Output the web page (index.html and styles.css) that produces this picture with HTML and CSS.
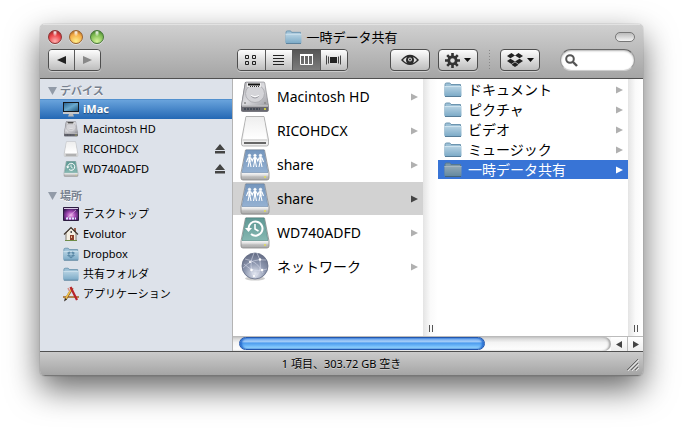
FILE: index.html
```html
<!DOCTYPE html>
<html lang="ja">
<head>
    <meta charset="UTF-8">
    <meta name="viewport" content="width=device-width, initial-scale=1.0">
    <title>一時データ共有</title>
    <link rel="stylesheet" href="styles.css">
</head>
<body>

    <!-- shared icons -->
    <svg class="sprite" aria-hidden="true">
        <defs>
            <linearGradient id="g-folder" x1="0" y1="0" x2="0" y2="1"><stop offset="0" stop-color="#b9d4e4"/><stop offset="1" stop-color="#7aa9c6"/></linearGradient>
            <linearGradient id="g-metal" x1="0" y1="0" x2="1" y2="1"><stop offset="0" stop-color="#b4b4b8"/><stop offset=".5" stop-color="#dcdce0"/><stop offset="1" stop-color="#9c9ca2"/></linearGradient>
            <linearGradient id="g-white" x1="0" y1="0" x2="0" y2="1"><stop offset="0" stop-color="#eeeeee"/><stop offset="1" stop-color="#ffffff"/></linearGradient>
            <linearGradient id="g-base" gradientUnits="userSpaceOnUse" x1="0" y1="23" x2="0" y2="31"><stop offset="0" stop-color="#ffffff"/><stop offset=".4" stop-color="#e0e0e0"/><stop offset=".6" stop-color="#bcbcbc"/><stop offset="1" stop-color="#a8a8a8"/></linearGradient>
            <linearGradient id="g-share" x1="0" y1="0" x2="0" y2="1"><stop offset="0" stop-color="#7596bd"/><stop offset="1" stop-color="#94b1d2"/></linearGradient>
            <linearGradient id="g-tm" x1="0" y1="0" x2="0" y2="1"><stop offset="0" stop-color="#5f9894"/><stop offset="1" stop-color="#86b8b2"/></linearGradient>
            <radialGradient id="g-globe" cx=".5" cy=".8" r=".8"><stop offset="0" stop-color="#e4e8f2"/><stop offset=".5" stop-color="#8e98b0"/><stop offset="1" stop-color="#626a82"/></radialGradient>
            <linearGradient id="g-screen" x1="0" y1="0" x2="1" y2="1"><stop offset="0" stop-color="#2b6694"/><stop offset=".5" stop-color="#69a8cd"/><stop offset="1" stop-color="#22597f"/></linearGradient>
            <radialGradient id="g-nebula" cx=".5" cy=".6" r=".6"><stop offset="0" stop-color="#f2b5ee"/><stop offset=".5" stop-color="#9c43ae"/><stop offset="1" stop-color="#351854"/></radialGradient>
        </defs>
        <symbol id="folder" viewBox="0 0 18 15">
            <path d="M1 13.500V2.500Q1 1 2.500 1H5.500Q6.500 1 7 2.500H16.500V13.500Z" fill="#9bbfd5" stroke="#6e96b0"/>
            <path d="M.5 4H17.500V13.500Q17.500 14.500 16.500 14.500H1.500Q.5 14.500 .5 13.500Z" fill="url(#g-folder)"/>
            <path d="M.5 4.500H17.500" stroke="#cfe3ee"/>
            <path d="M1 14.500H17" stroke="#577e99"/>
        </symbol>
        <symbol id="hd" viewBox="0 0 30 32">
            <path d="M5 1H24L28.500 25V29Q28.500 31 27 31H3Q1 31 1 29V25Z" fill="#77777f"/>
            <path d="M6.500 1H23.500Q24.500 1 24.800 2L28.500 24.500H1.500L5.200 2Q5.500 1 6.500 1Z" fill="url(#g-metal)" stroke="#85858a" stroke-width=".6"/>
            <ellipse cx="15" cy="12.500" rx="9.500" ry="9" fill="#d4d4d8" stroke="#a8a8ad" stroke-width=".8"/>
            <path d="M11 15Q15 19 19 15" fill="none" stroke="#9a9aa0"/>
            <path d="M11 14.500Q15 17 19 14.500" fill="none" stroke="#fff"/>
            <rect x="7" y="2" width="14" height="4" fill="#eee"/>
            <path d="M8 3.500H20" stroke="#111" stroke-width="2.200"/>
            <path d="M10 5.500H19" stroke="#333" stroke-dasharray="1 1"/>
            <circle cx="5" cy="22" r="1" fill="#888"/><circle cx="25" cy="22" r="1" fill="#888"/>
            <rect x="1.500" y="25" width="27" height="5" fill="#686870"/>
            <path d="M2 25H28" stroke="#eee"/>
            <path d="M4 28H20" stroke="#444a55" stroke-width="2" stroke-dasharray="2 1"/>
            <circle cx="25" cy="28" r="1" fill="#e8e83a"/>
        </symbol>
        <symbol id="disk" viewBox="0 0 30 32">
            <path d="M6 1.500H24L28.500 25V29Q28.500 31 26.500 31H3.500Q1.500 31 1.500 29V25Z" fill="#ededed" stroke="#a2a2a2" stroke-width=".8"/>
            <path d="M6.500 2H23.500L27 24H3Z" fill="url(#g-white)"/>
            <path d="M2.500 25H27.500" stroke="#ccc"/>
            <path d="M4 28H26" stroke="#666" stroke-width="1.800"/>
        </symbol>
        <symbol id="share" viewBox="0 0 30 32">
            <path d="M5.500 1H24.500L29 24V29Q29 31 27 31H3Q1 31 1 29V24Z" fill="url(#g-base)" stroke="#888" stroke-width=".8"/>
            <path d="M6 1H24L28 23.500H2Z" fill="url(#g-share)" stroke="#6b88aa" stroke-width=".6"/>
            <g fill="#fff" stroke="#fff" stroke-width=".6"><circle cx="9.500" cy="6.500" r="1.300"/><circle cx="15" cy="6.500" r="1.300"/><circle cx="20.500" cy="6.500" r="1.300"/>
            <path d="M9.500 8V13M15 8V13M20.500 8V13" stroke-width="2.200"/>
            <path d="M6.500 13L8 9H11L12.200 12L13.500 9H16.500L17.800 12L19 9H22L23.500 13M9.200 12L8 18M9.800 12L11 18M14.700 12L13.500 18M15.300 12L16.500 18M20.200 12L19 18M20.800 12L22 18" fill="none" stroke-width="1.100"/></g>
            <circle cx="25" cy="28" r="1" fill="#e0dc55"/>
        </symbol>
        <symbol id="timemachine" viewBox="0 0 30 32">
            <path d="M5.500 1H24.500L29 24V29Q29 31 27 31H3Q1 31 1 29V24Z" fill="url(#g-base)" stroke="#888" stroke-width=".8"/>
            <path d="M6 1H24L28 23.500H2Z" fill="url(#g-tm)" stroke="#4c8480" stroke-width=".6"/>
            <path d="M8.500 12A7 7 0 1 1 11 17" fill="none" stroke="#fff" stroke-width="2"/>
            <path d="M5 11H12L8.500 15Z" fill="#fff"/>
            <path d="M15 7V12L18.500 14" fill="none" stroke="#fff" stroke-width="1.600"/>
            <circle cx="25" cy="28" r="1" fill="#e0dc55"/>
        </symbol>
        <symbol id="network" viewBox="0 0 30 32">
            <ellipse cx="15" cy="27.500" rx="10" ry="2" fill="#ccc"/>
            <circle cx="15" cy="15" r="13" fill="url(#g-globe)" stroke="#656d85" stroke-width=".8"/>
            <path d="M3 17Q12 7 26 9M5 8Q18 10 23 22M4 13Q14 23 27 18M14 2Q8 14 14 27M17 2Q25 16 15 27" fill="none" stroke="#dce1ee" stroke-width=".7" opacity=".8"/>
            <g fill="#fff"><circle cx="10" cy="11" r="1.100"/><circle cx="20" cy="8.500" r="1.200"/><circle cx="11.500" cy="19" r="1.300"/><circle cx="22" cy="19" r="1.300"/><circle cx="14" cy="25" r="1.100"/></g>
        </symbol>
        <symbol id="eject" viewBox="0 0 10 10">
            <path d="M5 0L10 6H0ZM0 7H10V9.500H0Z" fill="currentColor"/>
        </symbol>
        <symbol id="arrow" viewBox="0 0 7 8">
            <path d="M0 .5L7 4L0 7.500Z" fill="currentColor"/>
        </symbol>
        <symbol id="dropbox" viewBox="0 0 16 14">
            <path d="M4.500 0L8 2.500L3.500 5.300L0 3ZM11.500 0L16 3L12.500 5.300L8 2.500ZM3.500 5.700L8 8.500L4.500 11L0 8ZM12.500 5.700L16 8L11.500 11L8 8.500ZM8 9.300L11.500 11.700L8 14L4.500 11.700Z" fill="currentColor"/>
        </symbol>
    </svg>

    <main class="window">
        <header class="titlebar">
            <div class="title-row">
                <div class="lights">
                    <button class="light close" aria-label="閉じる"></button>
                    <button class="light minimize" aria-label="しまう"></button>
                    <button class="light zoom" aria-label="拡大"></button>
                </div>
                <h1 class="title"><svg width="17" height="14"><use href="#folder"/></svg>一時データ共有</h1>
                <div class="title-end"><button class="pill" aria-label="ツールバー"></button></div>
            </div>
            <div class="toolbar">
                <div class="segments nav">
                    <button aria-label="戻る"><svg width="9" height="8" viewBox="0 0 9 8"><path d="M0 4L9 0V8Z" fill="#222"/></svg></button>
                    <button aria-label="進む"><svg width="9" height="8" viewBox="0 0 9 8"><path d="M9 4L0 0V8Z" fill="#888"/></svg></button>
                </div>
                <div class="segments views">
                    <button aria-label="アイコン"><svg width="12" height="12" viewBox="0 0 12 12"><path d="M.5 1.500H3.500V4.500H.5ZM7.500 1.500H10.500V4.500H7.500ZM.5 7.500H3.500V10.500H.5ZM7.500 7.500H10.500V10.500H7.500Z" fill="none" stroke="#222"/></svg></button>
                    <button aria-label="リスト"><svg width="12" height="12" viewBox="0 0 12 12"><path d="M0 1.500H11M0 4.500H11M0 7.500H11M0 10.500H11" stroke="#222"/></svg></button>
                    <button class="active" aria-label="カラム" aria-pressed="true"><svg width="13" height="12" viewBox="0 0 13 12"><path d="M.5 .5H12.500V10.500H.5ZM4.500 1V11M8.500 1V11" fill="none" stroke="#fff"/><path d="M0 1H13" stroke="#fff" stroke-width="2"/></svg></button>
                    <button aria-label="Cover Flow"><svg width="15" height="12" viewBox="0 0 15 12"><path d="M.5 1.500V10.500M2.500 2.500V9.500M12.500 2.500V9.500M14.500 1.500V10.500" stroke="#444"/><path d="M4 3H11V9H4Z" fill="#222"/></svg></button>
                </div>
                <div class="tools">
                    <button class="tool" aria-label="クイックルック"><svg width="18" height="12" viewBox="0 0 18 12"><path d="M0 6Q9 -4.500 18 6Q9 16 0 6Z" fill="#2a2a2a"/><path d="M2 6Q4 3.700 6 3Q4 6 6 9Q4 8.300 2 6ZM16 6Q14 3.700 12 3Q14 6 12 9Q14 8.300 16 6Z" fill="#ddd"/><circle cx="9" cy="5.500" r="1.900" fill="#ddd"/><circle cx="9" cy="5.500" r=".9" fill="#222"/></svg></button>
                    <button class="tool" aria-label="アクション"><svg width="15" height="15" viewBox="0 0 15 15"><path d="M7.500 0V15M0 7.500H15M2.200 2.200L12.800 12.800M12.800 2.200L2.200 12.800" stroke="#333" stroke-width="2.600"/><circle cx="7.500" cy="7.500" r="3.700" fill="#dedede" stroke="#333" stroke-width="2.800"/></svg><svg width="7" height="4" viewBox="0 0 7 4"><path d="M0 0H7L3.500 4Z" fill="#111"/></svg></button>
                    <span class="separator"></span>
                    <button class="tool" aria-label="Dropbox"><svg width="16" height="14"><use href="#dropbox"/></svg><svg width="7" height="4" viewBox="0 0 7 4"><path d="M0 0H7L3.500 4Z" fill="#111"/></svg></button>
                    <label class="search">
                        <svg width="13" height="13" viewBox="0 0 13 13"><circle cx="5" cy="5" r="3.800" fill="none" stroke="#555" stroke-width="2"/><path d="M8 8L12 12" stroke="#555" stroke-width="2.400"/></svg>
                        <input type="text" aria-label="検索">
                    </label>
                </div>
            </div>
        </header>

        <div class="content">
            <nav class="sidebar">
                <section class="group">
                    <h2><svg width="9" height="8" viewBox="0 0 9 8"><path d="M0 0H9L4.500 8Z" fill="#929ba8"/></svg>デバイス</h2>
                    <a class="place selected" href="#"><svg width="16" height="16" viewBox="0 0 16 16"><path d="M0 1H16V13H0Z" fill="#16191f"/><path d="M1 2H15V10H1Z" fill="url(#g-screen)"/><path d="M0 11H16V13H0Z" fill="#c5c8cc"/><path d="M6 13H10L11 15.500H5Z" fill="#b9b9b9"/></svg><span>iMac</span></a>
                    <a class="place" href="#"><svg width="16" height="16"><use href="#hd"/></svg><span>Macintosh HD</span></a>
                    <a class="place" href="#"><svg width="16" height="16"><use href="#disk"/></svg><span>RICOHDCX</span><svg class="eject" width="10" height="10"><use href="#eject"/></svg></a>
                    <a class="place" href="#"><svg width="16" height="16"><use href="#timemachine"/></svg><span>WD740ADFD</span><svg class="eject" width="10" height="10"><use href="#eject"/></svg></a>
                </section>
                <section class="group">
                    <h2><svg width="9" height="8" viewBox="0 0 9 8"><path d="M0 0H9L4.500 8Z" fill="#929ba8"/></svg>場所</h2>
                    <a class="place" href="#"><svg width="16" height="16" viewBox="0 0 16 16"><path d="M.5 1.500H15.500V14.500H.5Z" fill="url(#g-nebula)" stroke="#2c1b40"/><path d="M1 2.500H15" stroke="#d8c8e4"/><path d="M3 13L13 4" stroke="#f1c4f2" opacity=".6"/><path d="M3 12.500H13" stroke="#dbeaff" stroke-width="2" stroke-dasharray="2 1"/></svg><span>デスクトップ</span></a>
                    <a class="place" href="#"><svg width="16" height="16" viewBox="0 0 16 16"><path d="M3 7L8 2L13 7V14.500H3Z" fill="#f4eee2" stroke="#6c6358" stroke-width=".8"/><path d="M11 2H13V6H11Z" fill="#9b5e49"/><path d="M1 8.500L8 1.500L15 8.500" fill="none" stroke="#42372f" stroke-width="1.200"/><path d="M7 9H11V14.500H7Z" fill="#8d402c"/><path d="M7.500 5H9V7H7.500Z" fill="#555"/><path d="M8 10H9V12H8Z" fill="#e9b58b"/><path d="M2 14.500H14" stroke="#6e8b47"/></svg><span>Evolutor</span></a>
                    <a class="place" href="#"><svg width="16" height="16" viewBox="0 0 16 16"><use href="#folder" width="16" height="14" y="1"/><g color="#5c8aa8"><use href="#dropbox" x="4" y="5" width="8" height="8"/></g></svg><span>Dropbox</span></a>
                    <a class="place" href="#"><svg width="16" height="14"><use href="#folder"/></svg><span>共有フォルダ</span></a>
                    <a class="place" href="#"><svg width="16" height="16" viewBox="0 0 16 16"><path d="M0 11H16" stroke="#b18350" stroke-width="1.800"/><path d="M9.500 2L2.500 13.500" stroke="#7b4e24" stroke-width="2.400"/><path d="M9 2L2.500 13" stroke="#f0c14a" stroke-width="1.500"/><path d="M5 2L6.500 5" stroke="#d98f86" stroke-width="1.600"/><path d="M7.500 1L14 14" stroke="#b9222a" stroke-width="2.200"/><path d="M2 12L1 15.500L4 13.500Z" fill="#332a22"/></svg><span>アプリケーション</span></a>
                </section>
            </nav>

            <div class="browser">
                <div class="columns">
                    <div class="column large">
                        <div class="items">
                            <a class="item" href="#"><svg width="30" height="32"><use href="#hd"/></svg><span>Macintosh HD</span><svg class="arrow" width="7" height="8"><use href="#arrow"/></svg></a>
                            <a class="item" href="#"><svg width="30" height="32"><use href="#disk"/></svg><span>RICOHDCX</span><svg class="arrow" width="7" height="8"><use href="#arrow"/></svg></a>
                            <a class="item" href="#"><svg width="30" height="32"><use href="#share"/></svg><span>share</span><svg class="arrow" width="7" height="8"><use href="#arrow"/></svg></a>
                            <a class="item open" href="#"><svg width="30" height="32"><use href="#share"/></svg><span>share</span><svg class="arrow" width="7" height="8"><use href="#arrow"/></svg></a>
                            <a class="item" href="#"><svg width="30" height="32"><use href="#timemachine"/></svg><span>WD740ADFD</span><svg class="arrow" width="7" height="8"><use href="#arrow"/></svg></a>
                            <a class="item" href="#"><svg width="30" height="32"><use href="#network"/></svg><span>ネットワーク</span><svg class="arrow" width="7" height="8"><use href="#arrow"/></svg></a>
                        </div>
                        <div class="track"><span class="grip"></span></div>
                    </div>
                    <div class="column small">
                        <div class="items">
                            <a class="item" href="#"><svg width="18" height="15"><use href="#folder"/></svg><span>ドキュメント</span><svg class="arrow" width="7" height="8"><use href="#arrow"/></svg></a>
                            <a class="item" href="#"><svg width="18" height="15"><use href="#folder"/></svg><span>ピクチャ</span><svg class="arrow" width="7" height="8"><use href="#arrow"/></svg></a>
                            <a class="item" href="#"><svg width="18" height="15"><use href="#folder"/></svg><span>ビデオ</span><svg class="arrow" width="7" height="8"><use href="#arrow"/></svg></a>
                            <a class="item" href="#"><svg width="18" height="15"><use href="#folder"/></svg><span>ミュージック</span><svg class="arrow" width="7" height="8"><use href="#arrow"/></svg></a>
                            <a class="item selected" href="#"><svg class="dim" width="18" height="15"><use href="#folder"/></svg><span>一時データ共有</span><svg class="arrow" width="7" height="8"><use href="#arrow"/></svg></a>
                        </div>
                        <div class="track"><span class="grip"></span></div>
                    </div>
                </div>
                <div class="scrollbar">
                    <div class="rail"><div class="thumb"></div></div>
                    <button aria-label="左へ"><svg width="6" height="7" viewBox="0 0 6 7"><path d="M0 3.500L6 0V7Z" fill="#444"/></svg></button>
                    <button aria-label="右へ"><svg width="6" height="7" viewBox="0 0 6 7"><path d="M6 3.500L0 0V7Z" fill="#444"/></svg></button>
                </div>
            </div>
        </div>

        <footer class="status">
            <span>1 項目、303.72 GB 空き</span>
            <svg class="resize" width="12" height="12" viewBox="0 0 12 12"><path d="M1 12L12 1M5 12L12 5M9 12L12 9" stroke="#e4e4e4"/><path d="M0 11L11 0M4 11L11 4M8 11L11 8" stroke="#666"/></svg>
        </footer>
    </main>

</body>
</html>
```
FILE: styles.css
```css
* {
    box-sizing: border-box;
}
body {
    margin: 0;
    min-height: 100vh;
    padding: 24px 40px 54px;
    display: flex;
    background: #fff;
    color: #000;
    font-family: "Noto Sans", "Noto Sans CJK JP", sans-serif;
    font-size: 12px;
}
a {
    color: inherit;
    text-decoration: none;
}
button {
    padding: 0;
    border: none;
    font: inherit;
    color: #222;
    display: flex;
    align-items: center;
    justify-content: center;
}
svg {
    flex: none;
}
.sprite {
    position: absolute;
    width: 0;
    height: 0;
}
.window {
    flex: 1;
    min-width: 0;
    display: flex;
    flex-direction: column;
    border-radius: 5px;
    overflow: hidden;
    box-shadow: 0 0 1px rgba(0, 0, 0, 0.6), 0 13px 32px rgba(0, 0, 0, 0.6);
}

/* title bar and toolbar */
.titlebar {
    background: linear-gradient(#d0d0d0, #a5a5a5);
    border-top: 1px solid #e2e2e2;
    border-bottom: 1px solid #505050;
    padding: 0 8px 7px;
}
.title-row {
    display: grid;
    grid-template-columns: 1fr auto 1fr;
    align-items: center;
    height: 24px;
}
.lights {
    display: flex;
    gap: 7px;
}
.light {
    width: 14px;
    height: 14px;
    border-radius: 50%;
    box-shadow: 0 1px 0 rgba(255, 255, 255, 0.5);
}
.close {
    background: radial-gradient(ellipse at 50% 12%, #fff 0, transparent 28%), radial-gradient(circle at 50% 85%, #ffb0b0, #ec4549 55%, #7c2020 100%);
    border: 1px solid #8d3434;
}
.minimize {
    background: radial-gradient(ellipse at 50% 12%, #fff 0, transparent 28%), radial-gradient(circle at 50% 85%, #fff08c, #f4ab45 60%, #8a4d19 100%);
    border: 1px solid #9a632f;
}
.zoom {
    background: radial-gradient(ellipse at 50% 12%, #fff 0, transparent 28%), radial-gradient(circle at 50% 85%, #d5f59c, #7dba51 60%, #2c6420 100%);
    border: 1px solid #48783a;
}
.title {
    display: flex;
    align-items: center;
    gap: 4px;
    margin: 0;
    font-size: 13px;
    line-height: 20px;
    font-weight: normal;
}
.title-end {
    display: flex;
    justify-content: flex-end;
}
.pill {
    width: 20px;
    height: 10px;
    border: 1px solid #777;
    border-radius: 5px;
    background: linear-gradient(#bbb, #f4f4f4);
}
.toolbar {
    display: flex;
    align-items: center;
}
.segments {
    display: flex;
    height: 22px;
    border: 1px solid #4e4e4e;
    border-radius: 4px;
    overflow: hidden;
    box-shadow: 0 1px 0 rgba(255, 255, 255, 0.4);
}
.segments button {
    flex: 1;
    background: linear-gradient(#fdfdfd, #bdbdbd);
}
.segments button + button {
    border-left: 1px solid #5a5a5a;
}
.segments .active {
    background: linear-gradient(#565656, #7c7c7c);
}
.nav {
    width: 53px;
}
.views {
    width: 111px;
    margin-left: auto;
    margin-right: 42px;
}
.tools {
    display: flex;
    align-items: center;
    gap: 8px;
}
.tool {
    width: 40px;
    height: 22px;
    gap: 4px;
    border: 1px solid #4e4e4e;
    border-radius: 4px;
    background: linear-gradient(#fdfdfd, #bdbdbd);
    box-shadow: 0 1px 0 rgba(255, 255, 255, 0.4);
}
.separator {
    width: 6px;
    height: 20px;
    background: linear-gradient(90deg, transparent 3px, #888 3px, #888 4px, transparent 4px);
    mask: repeating-linear-gradient(#000 0 1px, transparent 1px 3px);
}
.search {
    display: flex;
    align-items: center;
    width: 75px;
    height: 22px;
    margin-left: 12px;
    padding: 0 4px;
    border-radius: 11px;
    border: 1px solid #999;
    border-top-color: #666;
    border-bottom-color: #ccc;
    background: #fff;
    box-shadow: inset 0 1px 2px rgba(0, 0, 0, 0.3);
}
.search input {
    width: 100%;
    min-width: 0;
    border: none;
    outline: none;
    background: none;
    font: inherit;
}

/* sidebar */
.content {
    flex: 1;
    display: flex;
    background: #fff;
}
.sidebar {
    width: 193px;
    flex: none;
    background: #dde2ea;
    border-right: 1px solid #b4b4b4;
}
.group {
    margin-bottom: 5px;
}
.group h2 {
    display: flex;
    align-items: center;
    gap: 3px;
    height: 20px;
    margin: 0;
    padding: 3px 0 0 8px;
    font-size: 11px;
    line-height: 17px;
    font-weight: bold;
    color: #77818f;
    text-shadow: 0 1px 0 #fff;
}
.place {
    display: flex;
    align-items: center;
    gap: 4px;
    height: 20px;
    padding: 0 7px 0 23px;
    font-size: 11px;
    line-height: 20px;
}
.place.selected {
    background: linear-gradient(#5190cf 1px, #69a3dc 1px, #2468b4);
    color: #fff;
    font-weight: bold;
    text-shadow: 0 1px 1px rgba(0, 0, 0, 0.4);
}
.eject {
    margin-left: auto;
    color: #444;
}

/* columns */
.browser {
    flex: 1;
    min-width: 0;
    display: flex;
    flex-direction: column;
}
.columns {
    flex: 1;
    display: flex;
}
.column {
    flex: 1;
    display: flex;
}
.items {
    flex: 1;
    display: flex;
    flex-direction: column;
    gap: 1px;
    padding-top: 1px;
}
.item {
    display: flex;
    align-items: center;
    padding-right: 5px;
    font-size: 14px;
    line-height: 19px;
}
.large .item {
    height: 33px;
    gap: 7px;
    padding-left: 7px;
}
.small .item {
    height: 19px;
    gap: 6px;
    padding-left: 6px;
}
.arrow {
    margin-left: auto;
    color: #b0b0b0;
}
.open {
    background: #d2d2d2;
}
.open .arrow {
    color: #444;
}
.item.selected {
    background: #3874d6;
    color: #fff;
}
.selected .arrow {
    color: #fff;
}
.dim {
    filter: brightness(0.8);
}
.track {
    width: 15px;
    display: flex;
    align-items: flex-end;
    justify-content: center;
    padding-bottom: 4px;
    background: linear-gradient(90deg, #e4e4e4, #fafafa 50%, #fff);
}
.grip {
    width: 4px;
    height: 7px;
    border: 1px solid #555;
    border-width: 0 1px;
}

/* horizontal scroll bar */
.scrollbar {
    display: flex;
    height: 15px;
    border-top: 1px solid #bbb;
    background: linear-gradient(#f4f4f4, #fff);
}
.rail {
    flex: 1;
    padding-left: 6px;
    border-radius: 0 8px 8px 0;
    background: linear-gradient(#cfcfcf, #f4f4f4 40%, #fff);
    box-shadow: inset -2px 0 2px #aaa;
}
.thumb {
    width: 66%;
    height: 13px;
    border: 1px solid #2458ae;
    border-radius: 7px;
    background: linear-gradient(#6fa8ee, #a5cef8 35%, #4b9bee 45%, #74bdfa 75%, #b2eaff);
    box-shadow: inset 2px 0 2px #2a6fd0, inset -2px 0 2px #2a6fd0;
}
.scrollbar button {
    width: 16px;
    background: linear-gradient(#fff, #eee);
}
.scrollbar button + button {
    border-left: 1px solid #bbb;
}

/* status bar */
.status {
    display: grid;
    grid-template-columns: 1fr auto 1fr;
    align-items: center;
    height: 25px;
    padding: 0 4px 2px;
    border-top: 1px solid #505050;
    border-bottom: 1px solid #777;
    background: linear-gradient(#cbcbcb, #a5a5a5);
    font-size: 11px;
    text-shadow: 0 1px 0 rgba(255, 255, 255, 0.4);
}
.status span {
    grid-column: 2;
}
.resize {
    justify-self: end;
    align-self: end;
    margin-bottom: 2px;
}
```
